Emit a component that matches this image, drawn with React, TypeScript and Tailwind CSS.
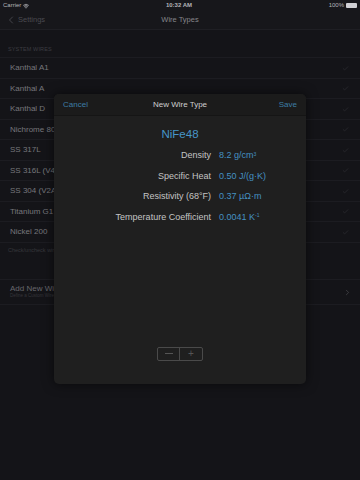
import { ChevronLeft, ChevronRight, Check, Wifi } from "lucide-react";

const wires = [
  "Kanthal A1",
  "Kanthal A",
  "Kanthal D",
  "Nichrome 80",
  "SS 317L",
  "SS 316L (V4A)",
  "SS 304 (V2A)",
  "Titanium G1",
  "Nickel 200",
];

const props = [
  { label: "Density", value: <>8.2 g/cm<sup className="text-[5px]">3</sup></> },
  { label: "Specific Heat", value: <>0.50 J/(g·K)</> },
  { label: "Resistivity (68°F)", value: <>0.37 µΩ·m</> },
  { label: "Temperature Coefficient", value: <>0.0041 K<sup className="text-[5px]">-1</sup></> },
];

export default function App() {
  return (
    <div
      className="relative w-[360px] h-[480px] overflow-hidden bg-[#141418] text-[#7c7c80]"
      style={{ fontFamily: '"Liberation Sans", Arial, sans-serif' }}
    >
      {/* status bar */}
      <div className="h-[11px] flex items-center justify-between px-[3px] text-[6px] text-[#b4b4b8] bg-[#17171b]">
        <div className="flex items-center gap-[2px]">
          <span>Carrier</span>
          <Wifi size={6} strokeWidth={3} />
        </div>
        <span className="font-bold">10:32 AM</span>
        <div className="flex items-center gap-[2px]">
          <span>100%</span>
          <div className="w-[11px] h-[5px] bg-[#d0d0d4] rounded-[1px]" />
        </div>
      </div>

      {/* nav bar */}
      <div className="h-[19px] flex items-center relative bg-[#17171b] border-b border-[#1f1f24]">
        <div className="flex items-center pl-[6px] text-[7.5px] text-[#4a4a50]">
          <ChevronLeft size={12} strokeWidth={1.75} className="-ml-[1px] mr-[1px]" />
          <span>Settings</span>
        </div>
        <div className="absolute inset-0 flex items-center justify-center text-[7.5px] text-[#85858a]">
          Wire Types
        </div>
      </div>

      {/* list */}
      <div className="pt-[15px]">
        <div className="px-[8px] text-[5.5px] tracking-wide text-[#3c3c42] pb-[4px]">SYSTEM WIRES</div>
        <div className="border-t border-[#1c1c21]">
          {wires.map((w) => (
            <div key={w} className="h-[20.5px] flex items-center justify-between pl-[10px] pr-[11px] border-b border-[#1c1c21] text-[8px] text-[#77777c]">
              <span>{w}</span>
              <Check size={7} strokeWidth={1.5} className="text-[#3e3e44]" />
            </div>
          ))}
        </div>
        <div className="px-[8px] pt-[3px] text-[5.5px] text-[#37373c]">Check/uncheck wires to show or hide them</div>
        <div className="mt-[25px] border-y border-[#1c1c21] h-[26px] flex items-center justify-between pl-[10px] pr-[8px]">
          <div className="flex flex-col leading-none">
            <span className="text-[8px] text-[#68686d]">Add New Wire Type</span>
            <span className="text-[4.5px] text-[#36363b] mt-[1px]">Define a Custom Wire</span>
          </div>
          <ChevronRight size={9} strokeWidth={1.5} className="text-[#55555a]" />
        </div>
      </div>

      {/* modal */}
      <div className="absolute left-[54px] top-[94px] w-[252px] h-[290px] rounded-[5px] bg-[#1f1f1f] overflow-hidden shadow-[0_0_12px_rgba(0,0,0,0.6)] flex flex-col">
        <div className="h-[22px] flex items-center justify-between px-[9px] bg-[#1b1b1b] border-b border-[#151515] relative">
          <span className="text-[8px] text-[#3d7ea6]">Cancel</span>
          <span className="absolute inset-0 flex items-center justify-center text-[8px] text-[#cfcfcf]">New Wire Type</span>
          <span className="text-[8px] text-[#3d7ea6]">Save</span>
        </div>
        <div className="flex flex-col items-center">
          <div className="mt-[10px] text-[11.5px] text-[#4696c8]">NiFe48</div>
          <div className="mt-[6px] flex flex-col gap-[8.5px] w-full">
            {props.map((p) => (
              <div key={p.label} className="flex items-center text-[9px] leading-[12px]">
                <span className="w-[157px] text-right text-[#c4c4c4]">{p.label}</span>
                <span className="ml-[8px] text-[#4591c2]">{p.value}</span>
              </div>
            ))}
          </div>
          <div className="mt-[124px] flex h-[14px] border border-[#4a4a4a] rounded-[2px]">
            <div className="w-[22px] flex items-center justify-center border-r border-[#4a4a4a]">
              <div className="w-[8px] h-px bg-[#555]" />
            </div>
            <div className="w-[22px] flex items-center justify-center text-[#555] text-[10px] leading-none">+</div>
          </div>
        </div>
      </div>
    </div>
  );
}
